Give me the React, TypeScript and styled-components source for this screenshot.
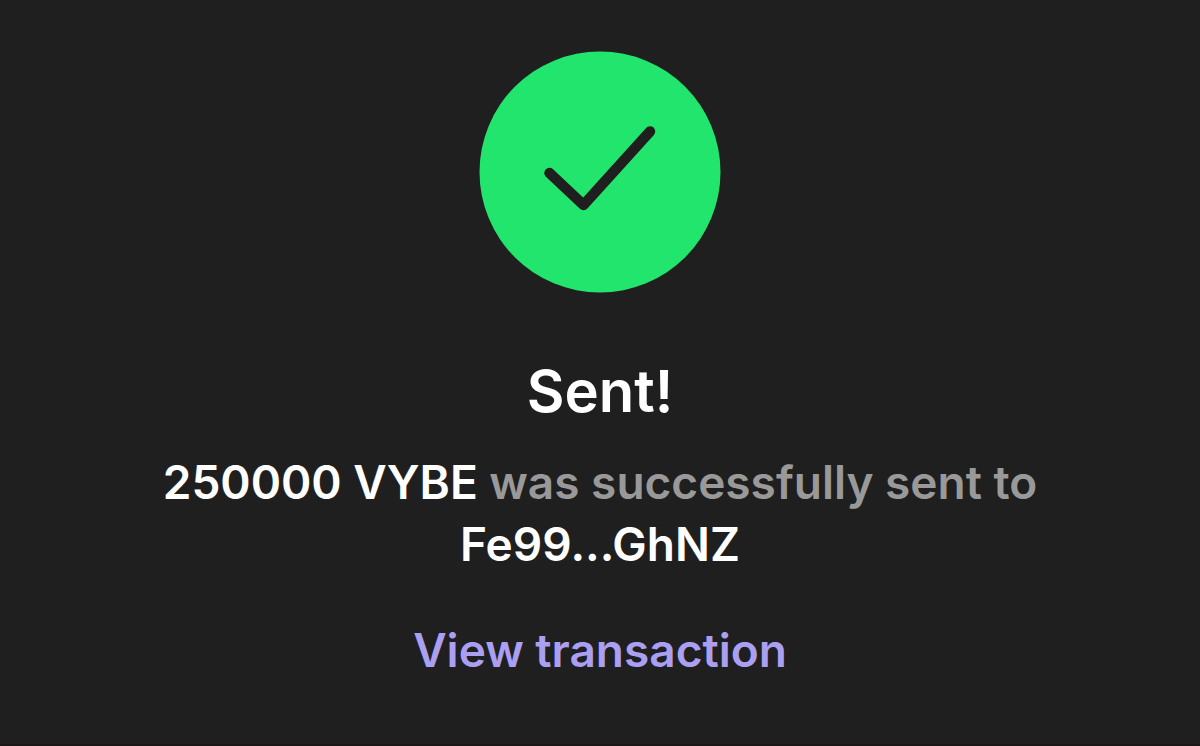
import React from "react";
import styled, { createGlobalStyle } from "styled-components";

const GlobalStyle = createGlobalStyle`
  body {
    margin: 0;
    background: #1f1f1f;
    font-family: Inter, "Liberation Sans", sans-serif;
  }
`;

const Page = styled.main`
  box-sizing: border-box;
  min-height: 100vh;
  padding: 52px 24px 40px;
  display: flex;
  flex-direction: column;
  align-items: center;
  text-align: center;
  border-bottom: 2px solid #1c1618;
`;

const StatusIcon = styled.svg`
  width: 240px;
  height: 240px;
  flex: none;
  overflow: visible;
`;

const Title = styled.h1`
  margin: 63px 0 0;
  font-size: 58px;
  line-height: 72px;
  font-weight: 600;
  color: #ffffff;
`;

const Message = styled.p`
  margin: 24px 0 0;
  max-width: 900px;
  font-size: 46px;
  line-height: 62px;
  font-weight: 600;
  color: #999999;
`;

const Strong = styled.strong`
  font-weight: 600;
  color: #ffffff;
`;

const TransactionLink = styled.a`
  margin-top: 44px;
  font-size: 46px;
  line-height: 62px;
  font-weight: 600;
  color: #ab9ff2;
  text-decoration: none;
`;

export default function App() {
  return (
    <>
      <GlobalStyle />
      <Page>
        <StatusIcon viewBox="0 0 240 240" role="img" aria-label="Success">
          <circle cx="120" cy="120" r="120.5" fill="#22e56d" />
          <path
            d="M69.500 121L103.500 153L170 79.500"
            fill="none"
            stroke="#1f1f1f"
            strokeWidth="10.5"
            strokeLinecap="round"
            strokeLinejoin="round"
          />
        </StatusIcon>
        <Title>Sent!</Title>
        <Message>
          <Strong>250000 VYBE</Strong> was successfully sent to
          <br />
          <Strong>Fe99...GhNZ</Strong>
        </Message>
        <TransactionLink href="#transaction">View transaction</TransactionLink>
      </Page>
    </>
  );
}
